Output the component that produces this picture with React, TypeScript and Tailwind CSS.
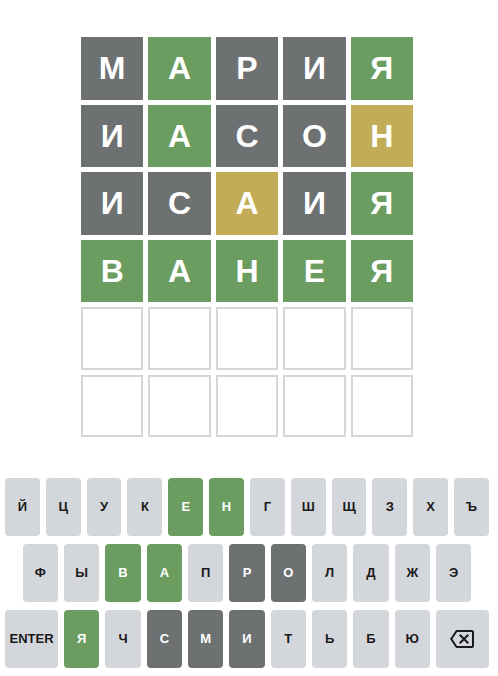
import React from 'react';

type State = 'gray' | 'green' | 'yellow' | 'empty' | 'key';

const tileColor: Record<State, string> = {
  gray: 'bg-[#6d7172] text-white',
  green: 'bg-[#6a9d5f] text-white',
  yellow: 'bg-[#c2ac58] text-white',
  empty: 'bg-white border-2 border-[#d3d6da]',
  key: 'bg-[#d3d6da] text-[#1a1a1b]',
};

const board: [string, State][][] = [
  [['М', 'gray'], ['А', 'green'], ['Р', 'gray'], ['И', 'gray'], ['Я', 'green']],
  [['И', 'gray'], ['А', 'green'], ['С', 'gray'], ['О', 'gray'], ['Н', 'yellow']],
  [['И', 'gray'], ['С', 'gray'], ['А', 'yellow'], ['И', 'gray'], ['Я', 'green']],
  [['В', 'green'], ['А', 'green'], ['Н', 'green'], ['Е', 'green'], ['Я', 'green']],
  [['', 'empty'], ['', 'empty'], ['', 'empty'], ['', 'empty'], ['', 'empty']],
  [['', 'empty'], ['', 'empty'], ['', 'empty'], ['', 'empty'], ['', 'empty']],
];

const keyStates: Record<string, State> = {
  е: 'green', н: 'green', в: 'green', а: 'green', я: 'green',
  р: 'gray', о: 'gray', с: 'gray', м: 'gray', и: 'gray',
};

const rows = [
  ['й', 'ц', 'у', 'к', 'е', 'н', 'г', 'ш', 'щ', 'з', 'х', 'ъ'],
  ['ф', 'ы', 'в', 'а', 'п', 'р', 'о', 'л', 'д', 'ж', 'э'],
  ['enter', 'я', 'ч', 'с', 'м', 'и', 'т', 'ь', 'б', 'ю', 'back'],
];

function BackspaceIcon() {
  return (
    <svg width="24" height="24" viewBox="0 0 24 24">
      <path
        fill="#1a1a1b"
        d="M22 3H7c-.69 0-1.23.35-1.59.88L0 12l5.41 8.11c.36.53.9.89 1.59.89h15c1.1 0 2-.9 2-2V5c0-1.1-.9-2-2-2zm0 16H7.07L2.4 12l4.66-7H22v14zM10.41 17L14 13.41 17.59 17 19 15.59 15.41 12 19 8.41 17.59 7 14 10.59 10.41 7 9 8.41 12.59 12 9 15.59z"
      />
    </svg>
  );
}

function Key({ k }: { k: string }) {
  const wide = k === 'enter' || k === 'back';
  const state = keyStates[k] ?? 'key';
  return (
    <button
      className={`h-[58px] rounded-[4px] flex items-center justify-center font-bold uppercase text-[13px] ${
        wide ? 'flex-[1.5]' : 'flex-1'
      } ${tileColor[state]}`}
    >
      {k === 'back' ? <BackspaceIcon /> : k}
    </button>
  );
}

export default function App() {
  return (
    <div
      className="w-[494px] h-[676px] flex flex-col bg-white pt-[37px] px-[5px] pb-[8px]"
      style={{ fontFamily: '"Liberation Sans", Arial, sans-serif' }}
    >
      <div className="w-[332px] h-[400px] mx-auto grid grid-cols-5 grid-rows-6 gap-[5px]">
        {board.flat().map(([ch, st], i) => (
          <div
            key={i}
            className={`flex items-center justify-center text-[32px] font-bold leading-none ${tileColor[st]}`}
          >
            {ch}
          </div>
        ))}
      </div>

      <div className="mt-auto flex flex-col gap-[8px]">
        {rows.map((row, ri) => (
          <div key={ri} className="flex gap-[6px]">
            {ri === 1 && <div className="flex-[0.5] -mr-[6px]" />}
            {row.map((k) => (
              <Key key={k} k={k} />
            ))}
            {ri === 1 && <div className="flex-[0.5] -ml-[6px]" />}
          </div>
        ))}
      </div>
    </div>
  );
}
